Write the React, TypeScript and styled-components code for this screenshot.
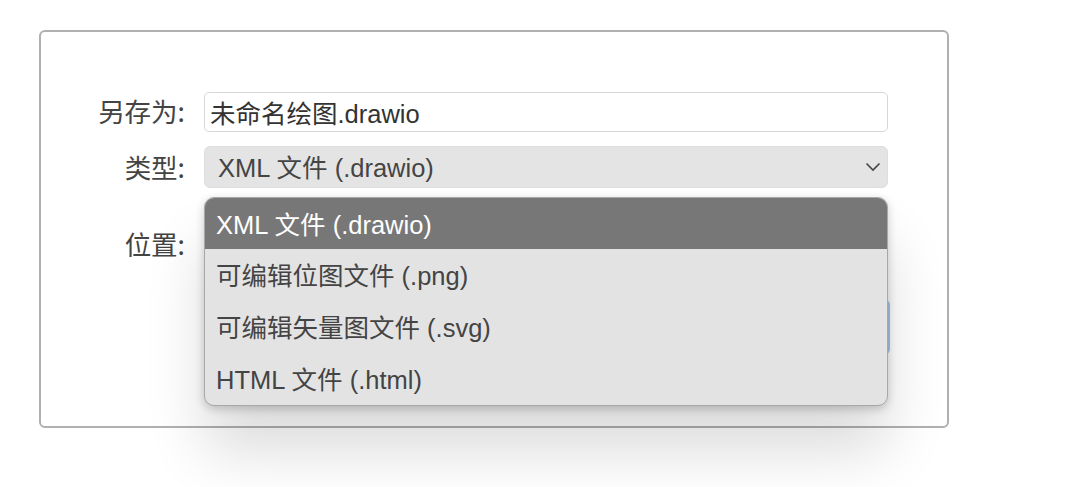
import React, { useState } from "react";
import styled, { createGlobalStyle, css } from "styled-components";

const GlobalStyle = createGlobalStyle`
  html, body {
    margin: 0;
    padding: 0;
    background: #ffffff;
  }
  body {
    font-family: "Liberation Sans", "Noto Sans CJK SC", sans-serif;
    color: #333;
  }
`;

const options = [
  "XML 文件 (.drawio)",
  "可编辑位图文件 (.png)",
  "可编辑矢量图文件 (.svg)",
  "HTML 文件 (.html)",
];

const App = () => {
  const [selected, setSelected] = useState<number>(0);
  return (
    <>
      <GlobalStyle />
      <Page>
        <Dialog>
          <Form>
            <Label>另存为:</Label>
            <TextInput defaultValue="未命名绘图.drawio" />

            <Label>类型:</Label>
            <SelectWrap>
              <SelectBox>
                <span>{options[selected]}</span>
                <Chevron width="16" height="10" viewBox="0 0 16 10">
                  <path d="M1.5 1.5 L8 8 L14.5 1.5" fill="none" stroke="#444" strokeWidth="1.6" />
                </Chevron>
              </SelectBox>
              <Menu>
                {options.map((o, i) => (
                  <MenuItem key={o} active={i === selected} onClick={() => setSelected(i)}>
                    {o}
                  </MenuItem>
                ))}
              </Menu>
            </SelectWrap>

            <Label top>位置:</Label>
            <Hidden>
              <SelectBox />
              <BlueBox />
            </Hidden>
          </Form>
        </Dialog>
      </Page>
    </>
  );
};

const Page = styled.div`
  padding: 30px 0 0 39px;
  height: 457px;
  box-sizing: content-box;
  overflow: hidden;
`;

const Dialog = styled.div`
  width: 910px;
  height: 398px;
  box-sizing: border-box;
  border: 2px solid #b0b0b0;
  border-radius: 6px;
  background: #ffffff;
  padding: 59px 0 0 0;
`;

const Form = styled.div`
  display: grid;
  grid-template-columns: 144px 684px;
  column-gap: 19px;
  row-gap: 14px;
  align-items: center;
`;

const Label = styled.div<{ top?: boolean }>`
  text-align: right;
  font-size: 26.5px;
  color: #444;
  font-family: "Noto Sans CJK SC", sans-serif;
  line-height: 40px;
  padding-bottom: 1px;
  ${({ top }) =>
    top &&
    css`
      align-self: start;
      margin-top: 20px;
      line-height: 43px;
    `}
`;

const TextInput = styled.input`
  height: 40px;
  box-sizing: border-box;
  border: 1px solid #d8d8d8;
  border-radius: 5px;
  padding: 0 5px 1px;
  font-size: 25.5px;
  color: #333;
  font-family: "Liberation Sans", "Noto Sans CJK SC", sans-serif;
  outline: none;
`;

const SelectWrap = styled.div`
  position: relative;
`;

const SelectBox = styled.div`
  height: 42px;
  box-sizing: border-box;
  background: #e4e4e4;
  border: 1px solid #dedede;
  border-radius: 6px;
  padding: 0 6px 4px 13px;
  display: flex;
  align-items: center;
  justify-content: space-between;
  font-size: 25.5px;
  color: #444;
`;

const Chevron = styled.svg`
  flex-shrink: 0;
  margin-top: 4px;
`;

const Menu = styled.div`
  position: absolute;
  top: calc(100% + 9px);
  left: 0;
  width: 684px;
  box-sizing: border-box;
  background: #e3e3e3;
  border: 1px solid #a8a8a8;
  border-radius: 10px;
  overflow: hidden;
  z-index: 10;
  box-shadow: 0 3px 10px rgba(0, 0, 0, 0.2), 0 45px 60px rgba(0, 0, 0, 0.14);
`;

const MenuItem = styled.div<{ active: boolean }>`
  height: 52px;
  box-sizing: border-box;
  padding: 0 0 3px 11px;
  display: flex;
  align-items: center;
  font-size: 25.5px;
  color: #444;
  cursor: default;
  ${({ active }) =>
    active &&
    css`
      height: 51px;
      background: #777777;
      color: #ffffff;
    `}
`;

const Hidden = styled.div`
  display: flex;
  flex-direction: column;
  gap: 35px;
  margin-top: 20px;
`;

const BlueBox = styled.div`
  height: 52px;
  margin-right: -2px;
  border: 2px solid #a6c8e8;
  border-radius: 6px;
`;

export default App;
